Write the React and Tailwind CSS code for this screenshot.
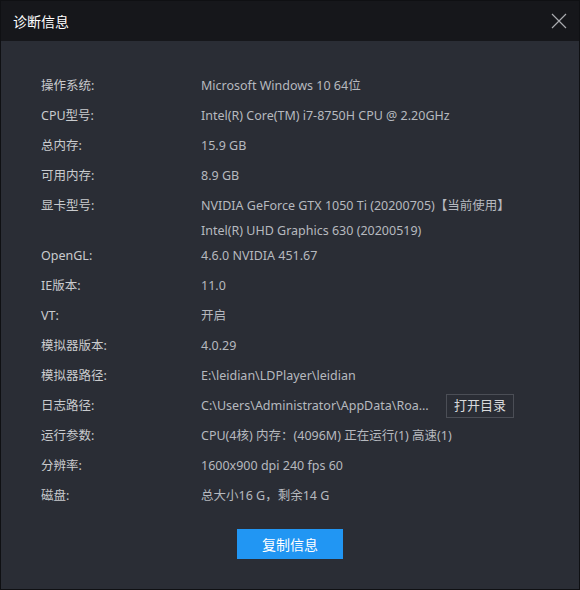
import React from 'react';

const rows = [
  { label: '操作系统:', values: ['Microsoft Windows 10 64位'] },
  { label: 'CPU型号:', values: ['Intel(R) Core(TM) i7-8750H CPU @ 2.20GHz'] },
  { label: '总内存:', values: ['15.9 GB'] },
  { label: '可用内存:', values: ['8.9 GB'] },
  { label: '显卡型号:', values: ['NVIDIA GeForce GTX 1050 Ti (20200705)【当前使用】', 'Intel(R) UHD Graphics 630 (20200519)'] },
  { label: 'OpenGL:', values: ['4.6.0 NVIDIA 451.67'] },
  { label: 'IE版本:', values: ['11.0'] },
  { label: 'VT:', values: ['开启'] },
  { label: '模拟器版本:', values: ['4.0.29'] },
  { label: '模拟器路径:', values: ['E:\\leidian\\LDPlayer\\leidian'] },
  { label: '日志路径:', values: ['C:\\Users\\Administrator\\AppData\\Roaming\\leidian\\log'], button: '打开目录' },
  { label: '运行参数:', values: ['CPU(4核) 内存：(4096M) 正在运行(1) 高速(1)'] },
  { label: '分辨率:', values: ['1600x900 dpi 240 fps 60'] },
  { label: '磁盘:', values: ['总大小16 G，剩余14 G'] },
];

const App = () => {
  return (
    <div
      className="w-[580px] h-[590px] flex flex-col border border-[#0f1013] bg-[#2a2d35] text-[12.5px]"
      style={{ fontFamily: '"Noto Sans", "Noto Sans CJK SC", sans-serif' }}
    >
      {/* Header */}
      <div className="h-[40px] flex-shrink-0 bg-[#16171b] flex items-center justify-between pl-[12px] pr-[12px]">
        <span className="text-[14px] text-white">诊断信息</span>
        <button className="w-[16px] h-[16px] flex items-center justify-center">
          <svg width="16" height="16" viewBox="0 0 16 16">
            <path d="M1 1L15 15M15 1L1 15" stroke="#a9abaf" strokeWidth="1.2" />
          </svg>
        </button>
      </div>

      {/* Info list */}
      <div className="flex-1 flex flex-col pt-[30px] pl-[40px]">
        {rows.map((row, i) => (
          <div key={i} className="flex">
            <div className="w-[160px] h-[30px] flex items-center text-[#c9cbce]">{row.label}</div>
            <div className="flex flex-col">
              {row.values.map((v, j) => (
                <div
                  key={j}
                  className={`${j === 0 ? 'h-[30px]' : 'h-[20px]'} flex items-center text-[#b6b9bf]`}
                >
                  {row.button ? (
                    <>
                      <span className="w-[240px] truncate pr-[2px]">{v}</span>
                      <button className="ml-[5px] h-[24px] px-[7px] border border-[#4b4e56] text-[#d8d9db] text-[13px] flex items-center whitespace-nowrap">
                        {row.button}
                      </button>
                    </>
                  ) : (
                    <span className="whitespace-nowrap">{v}</span>
                  )}
                </div>
              ))}
            </div>
          </div>
        ))}

        <div className="flex justify-center pr-[40px] mt-[18px]">
          <button className="w-[106px] h-[30px] bg-[#2196f3] text-white text-[14px] flex items-center justify-center">
            复制信息
          </button>
        </div>
      </div>
    </div>
  );
};

export default App;
